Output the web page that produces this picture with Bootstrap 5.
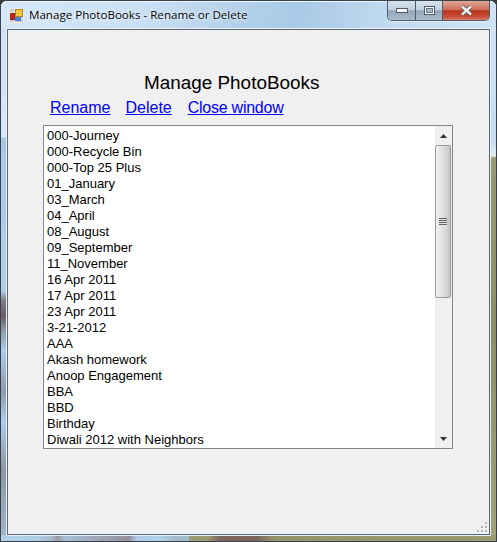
<!DOCTYPE html>
<html lang="en">
<head>
    <meta charset="UTF-8">
    <meta name="viewport" content="width=device-width, initial-scale=1.0">
    <title>Manage PhotoBooks</title>
    <link href="https://cdn.jsdelivr.net/npm/bootstrap@5.3.0/dist/css/bootstrap.min.css" rel="stylesheet">
    <style>
        html, body { height: 100%; }
        body {
            font-family: "Liberation Sans", Arial, sans-serif;
            background: #3a3a30;
            color: #000;
            overflow: hidden;
        }
        .win-frame {
            width: 497px;
            height: 542px;
            padding: 0 6px 6px 6px;
            border: 1px solid #39424c;
            border-radius: 7px 7px 0 0;
            background-color: #b6d4ee;
            background-image:
                linear-gradient(90deg, #b4d2ec 0, #aecbe4 20%, #a8bccc 27%, #9a9aa0 30%, #a6c0d8 34%, #a0a8b8 50%, #96909c 68%, #aecce8 72%, #b0d0ec 84%, #a0b8c8 95%, #a0bcd4 100%),
                linear-gradient(90deg, #9c9a70 0, #9c9a70 6%, #7c6860 10%, #7c6860 22%, #969368 28%, #9c9a70 100%),
                linear-gradient(180deg, #cfe3f4 0, #c6ddf2 140px, #e4ece8 155px, #9a9870 157px, #8f8d62 60%, #a3a178 100%),
                linear-gradient(180deg, #cfe3f4 0, #d6e8f7 136px, #a6c8e6 137px, #b0cfea 290px, #7c7c84 300px, #705a64 315px, #8f9ca8 330px, #aaccea 350px, #8e9cac 390px, #aaccea 420px, #8e98a4 470px, #a0b8cc 100%);
            background-repeat: no-repeat;
            background-size: 38% 6px, 62% 6px, 6px 100%, 6px 100%;
            background-position: left bottom, right bottom, right top, left top;
        }
        .win-caption {
            height: 28px;
            margin: 0 -6px;
            padding: 0 6px 0 8px;
            background: linear-gradient(100deg, #d6e8f7 0, #c9dff3 30%, #b3d1eb 48%, #a9c9e6 60%, #c3dcf2 80%, #cfe3f5 100%);
            border-radius: 6px 6px 0 0;
            box-shadow: inset 0 1px 0 #eef6fc;
        }
        .win-title {
            font-family: "Open Sans", "Liberation Sans", sans-serif;
            font-size: 11.6px;
            margin-left: 5px;
            margin-top: -1px;
            white-space: nowrap;
            text-shadow: 0 0 4px #eef6fd, 0 0 2px #eef6fd;
        }
        .win-buttons { height: 20px; align-self: flex-start; border: 1px solid #4f5b68; border-top: 0; border-radius: 0 0 5px 5px; overflow: hidden; box-shadow: 0 1px 0 #e4eff9; }
        .win-btn { height: 100%; border-right: 1px solid #4f5b68; }
        .btn-min, .btn-max { background: linear-gradient(180deg, #d6e2ec 0, #c3d1de 45%, #93a6b9 52%, #aabbcb 100%); }
        .btn-min { width: 28px; }
        .btn-max { width: 27px; }
        .btn-close-red { width: 46px; border-right: 0; background: linear-gradient(180deg, #e0a898 0, #cf6d58 45%, #b8321b 52%, #c8523c 85%, #d8806c 100%); }
        .client-area {
            height: 506px;
            background: #f0f0f0;
            border: 1px solid #5f6872;
            box-shadow: 0 0 0 1px #e4eff9;
            padding-left: 35px;
            position: relative;
        }
        .page-heading { font-size: 18.9px; line-height: 21px; padding: 42px 0 0 101px; white-space: nowrap; }
        .link-row { font-size: 16px; line-height: 18px; padding: 6px 0 8px 7px; gap: 15px; }
        .link-row a { color: #0000ff; }
        .link-row a:last-child { letter-spacing: -0.25px; margin-left: 1px; }
        .list-frame { width: 410px; height: 324px; background: #fff; border: 1px solid #828790; }
        .book-list { font-size: 13px; line-height: 16px; padding: 2px 0 0 3px; margin: 0; list-style: none; overflow: hidden; white-space: nowrap; }
        .scroll-track { width: 17px; background: #f0f0f0; padding-right: 1px; }
        .scroll-arrow { height: 19px; }
        .scroll-thumb {
            height: 153px;
            border: 1px solid #9a9a9a;
            border-radius: 2px;
            background: linear-gradient(90deg, #f2f2f2 0, #e0e0e0 50%, #c6c6c6 100%);
        }
        .grip-mark { width: 8px; height: 8px; background: repeating-linear-gradient(180deg, #5f5f5f 0, #5f5f5f 1px, #e8e8e8 1px, #e8e8e8 2px); }
        .resize-grip { position: absolute; right: 1px; bottom: 1px; }
    </style>
</head>
<body>
    <div class="win-frame">
        <!-- Title bar -->
        <div class="win-caption d-flex align-items-center">
            <svg width="15" height="15" viewBox="0 0 15 15">
                <rect x="0" y="0" width="15" height="15" fill="#c8c8c8"/>
                <path d="M0.5 4.5H15M0.5 10.5H15M5.5 0V15M0.5 0.5H14.5V14.5H0.5z" fill="none" stroke="#ececec"/>
                <rect x="1.5" y="5.5" width="4" height="6" fill="#d81e10" stroke="#8a2a20"/>
                <rect x="6.5" y="1.5" width="7" height="7" fill="#f5c542" stroke="#b08a20"/>
                <rect x="6" y="9" width="6" height="4" fill="#4a82d8"/>
            </svg>
            <span class="win-title">Manage PhotoBooks - Rename or Delete</span>
            <div class="win-buttons d-flex ms-auto">
                <div class="win-btn btn-min d-flex justify-content-center align-items-center">
                    <svg width="12" height="6" viewBox="0 0 12 6"><rect x="0.5" y="0.5" width="11" height="4" fill="#fff" stroke="#4c5866"/></svg>
                </div>
                <div class="win-btn btn-max d-flex justify-content-center align-items-center">
                    <svg width="11" height="9" viewBox="0 0 11 9"><rect x="0.5" y="0.5" width="10" height="8" fill="#fff" stroke="#4c5866"/><rect x="2.5" y="2.5" width="6" height="4" fill="#a9bbcc" stroke="#6b7886"/></svg>
                </div>
                <div class="win-btn btn-close-red d-flex justify-content-center align-items-center">
                    <svg width="13" height="11" viewBox="0 0 13 11"><path d="M2 1.5L11 9.5M11 1.5L2 9.5" stroke="#4a5058" stroke-width="4"/><path d="M2 1.5L11 9.5M11 1.5L2 9.5" stroke="#f2f2f2" stroke-width="2.4"/></svg>
                </div>
            </div>
        </div>

        <!-- Form body -->
        <div class="client-area">
            <div class="page-heading">Manage PhotoBooks</div>
            <div class="link-row d-flex">
                <a href="#">Rename</a>
                <a href="#">Delete</a>
                <a href="#">Close window</a>
            </div>
            <div class="list-frame d-flex">
                <ul class="book-list flex-grow-1" id="bookList"></ul>
                <div class="scroll-track d-flex flex-column flex-shrink-0">
                    <div class="scroll-arrow d-flex justify-content-center align-items-center">
                        <svg width="7" height="4" viewBox="0 0 7 4"><path d="M3.5 0L7 4H0z" fill="#333"/></svg>
                    </div>
                    <div class="scroll-thumb d-flex justify-content-center align-items-center">
                        <div class="grip-mark"></div>
                    </div>
                    <div class="scroll-arrow d-flex justify-content-center align-items-center mt-auto">
                        <svg width="7" height="4" viewBox="0 0 7 4"><path d="M0 0H7L3.5 4z" fill="#333"/></svg>
                    </div>
                </div>
            </div>
            <svg class="resize-grip" width="11" height="11" viewBox="0 0 11 11" fill="#b5b5b5">
                <rect x="8" y="0" width="2" height="2"/>
                <rect x="4" y="4" width="2" height="2"/><rect x="8" y="4" width="2" height="2"/>
                <rect x="0" y="8" width="2" height="2"/><rect x="4" y="8" width="2" height="2"/><rect x="8" y="8" width="2" height="2"/>
            </svg>
        </div>
    </div>

    <script>
        const BOOKS = ["000-Journey", "000-Recycle Bin", "000-Top 25 Plus", "01_January", "03_March", "04_April",
            "08_August", "09_September", "11_November", "16 Apr 2011", "17 Apr 2011", "23 Apr 2011", "3-21-2012",
            "AAA", "Akash homework", "Anoop Engagement", "BBA", "BBD", "Birthday", "Diwali 2012 with Neighbors"];

        let bookList = document.getElementById("bookList");
        BOOKS.forEach(name => {
            let item = document.createElement("li");
            item.textContent = name;
            bookList.appendChild(item);
        });
    </script>
    <script src="https://cdn.jsdelivr.net/npm/bootstrap@5.3.0/dist/js/bootstrap.bundle.min.js"></script>
</body>
</html>
